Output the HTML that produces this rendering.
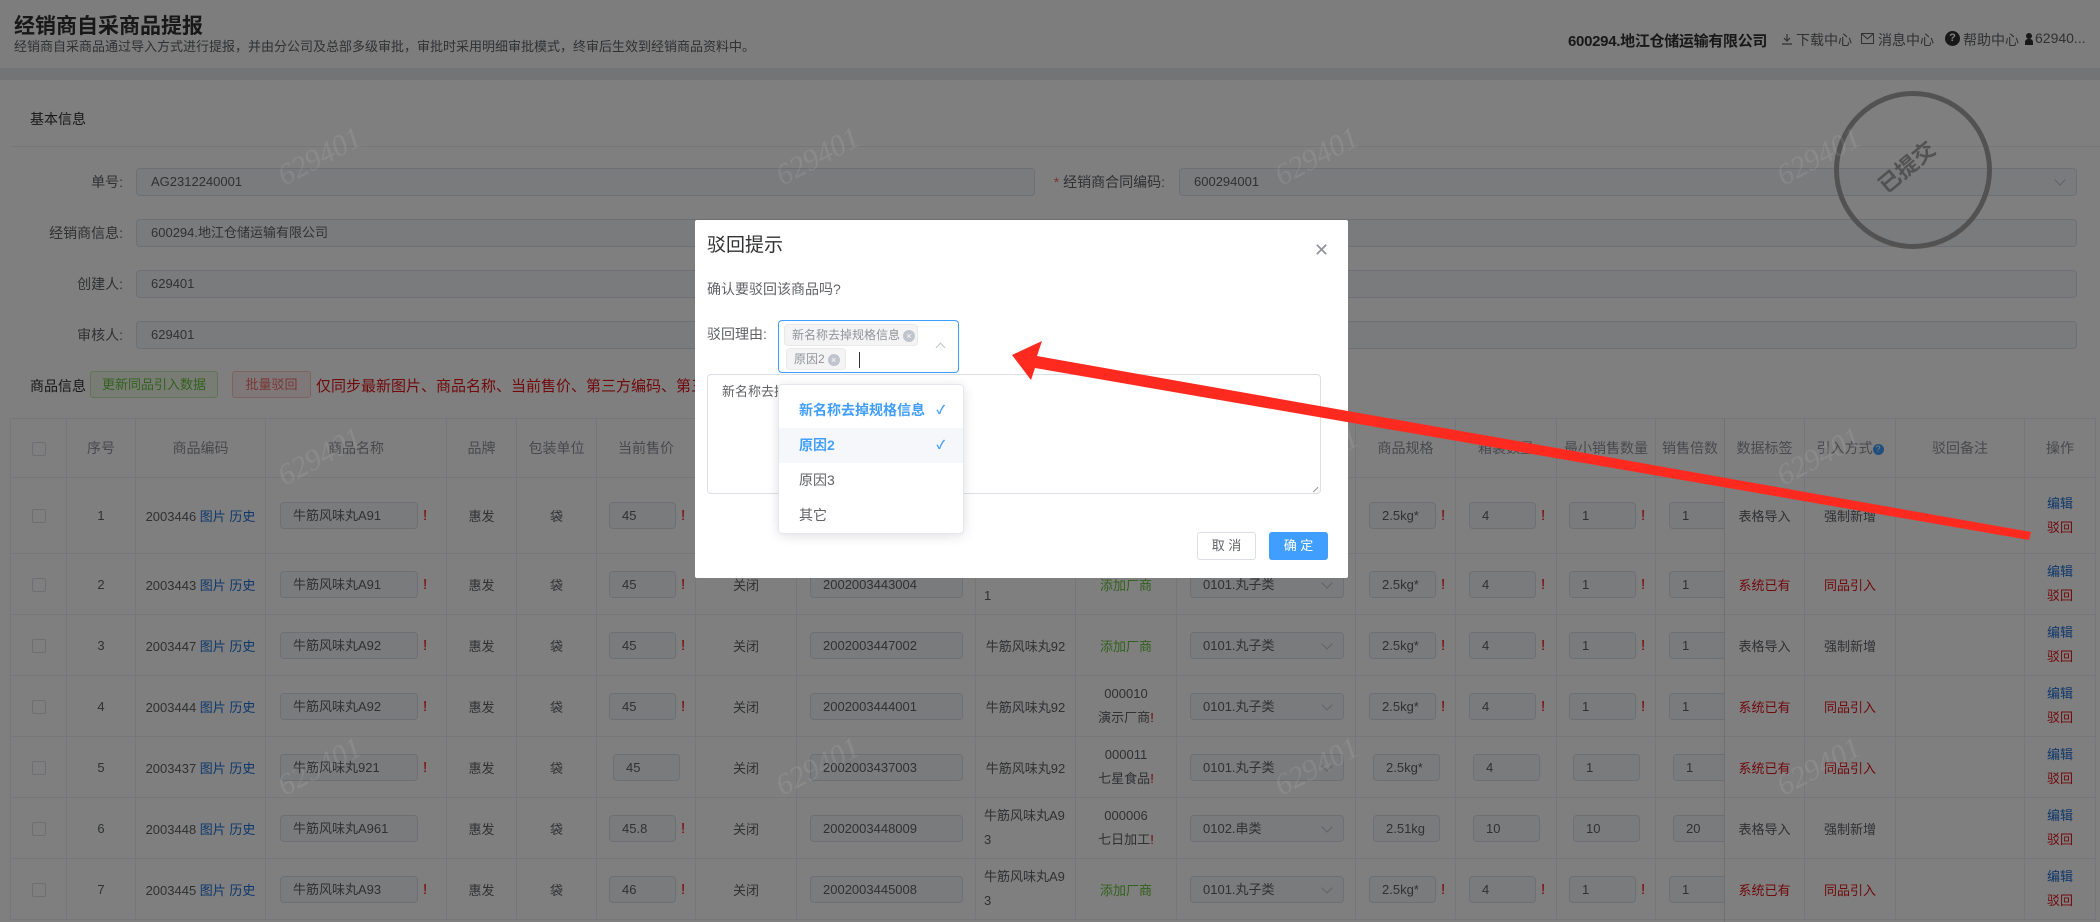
<!DOCTYPE html>
<html><head><meta charset="utf-8">
<style>
*{box-sizing:border-box;margin:0;padding:0}
body{width:2100px;height:922px;overflow:hidden;position:relative;background:#f0f2f5;font-family:"Liberation Sans","Noto Sans CJK SC",sans-serif;color:#606266;font-size:13px}
.a{position:absolute}
#hdr{left:0;top:0;width:2100px;height:68px;background:#fafafa}
#band{left:0;top:68px;width:2100px;height:12px;background:#e6e8eb}
#card{left:0;top:80px;width:2100px;height:842px;background:#fff}
.lbl{position:absolute;font-size:14px;color:#606266;text-align:right}
.inp{position:absolute;height:28px;border:1px solid #dcdfe6;background:#f5f7fa;border-radius:4px;font-size:13px;line-height:26px;padding-left:14px;color:#606266}
table{position:absolute;left:10px;top:418px;border-collapse:collapse;table-layout:fixed;width:2085px}
td,th{border:1px solid #ebeef5;text-align:center;font-size:13px;color:#606266;white-space:nowrap;overflow:hidden;vertical-align:middle}
th{height:59px;color:#909399;font-weight:normal;font-size:14px}
tr.r1 td{height:76px}
tr.rn td{height:61px}
.in{display:inline-block;height:27px;border:1px solid #dcdfe6;background:#f5f7fa;border-radius:4px;line-height:25px;text-align:left;padding-left:12px;vertical-align:middle;overflow:hidden}
.ex{color:#f00;font-size:15px;margin-left:5px;vertical-align:middle}
td.l{text-align:left}
.bl{color:#1d6fd6}
.rd{color:#e0141a}
.gr{color:#67c23a}
.ck{display:inline-block;width:14px;height:14px;border:1px solid #dcdfe6;border-radius:2px;background:#fff;vertical-align:middle}
.sel{position:relative}
.sel:after{content:"";position:absolute;right:12px;top:7px;width:7px;height:7px;border-right:1px solid #c0c4cc;border-bottom:1px solid #c0c4cc;transform:rotate(45deg)}
.two{line-height:24px}
#ov{left:0;top:0;width:2100px;height:922px;background:rgba(0,0,0,.5)}
.wm{position:absolute;font-family:"Liberation Serif",serif;font-style:italic;font-size:30px;color:rgba(255,255,255,.09);transform:rotate(-28deg)}
#modal{left:695px;top:220px;width:653px;height:358px;background:#fff;border-radius:2px}
.dd{position:absolute;left:778px;top:384px;width:186px;height:150px;background:#fff;border:1px solid #e4e7ed;border-radius:4px;box-shadow:0 2px 12px rgba(0,0,0,.12)}
.it{position:absolute;left:0;width:184px;height:35px;line-height:35px;padding-left:20px;font-size:14px;color:#606266}
.chk{position:absolute;right:18px;top:0;color:#409eff;font-size:12px}
.tag{position:absolute;height:22px;background:#f4f4f5;border:1px solid #e9e9eb;border-radius:4px;font-size:12px;color:#909399;line-height:20px;padding-left:7px}
.tx{display:inline-block;width:12px;height:12px;border-radius:50%;background:#c0c4cc;color:#fff;font-size:9px;line-height:12px;text-align:center;vertical-align:middle;margin-left:3px}
</style></head><body>
<div id="hdr" class="a"></div>
<div class="a" style="left:14px;top:10px;font-size:21px;font-weight:bold;color:#303133">经销商自采商品提报</div>
<div class="a" style="left:14px;top:36px;font-size:13px;color:#606266">经销商自采商品通过导入方式进行提报，并由分公司及总部多级审批，审批时采用明细审批模式，终审后生效到经销商品资料中。</div>
<div class="a" style="left:1568px;top:30px;font-size:15px;font-weight:bold;color:#303133;letter-spacing:-0.3px">600294.地江仓储运输有限公司</div>
<svg class="a" style="left:1781px;top:33px" width="12" height="12"><path d="M6 1v7M3 5l3 3 3-3M1 11h10" stroke="#606266" fill="none" stroke-width="1.2"/></svg>
<div class="a" style="left:1796px;top:30px;font-size:14px;color:#606266">下载中心</div>
<svg class="a" style="left:1861px;top:33px" width="13" height="11"><rect x="0.5" y="0.5" width="12" height="10" fill="none" stroke="#606266"/><path d="M1 1l5.5 5 5.5-5" stroke="#606266" fill="none"/></svg>
<div class="a" style="left:1878px;top:30px;font-size:14px;color:#606266">消息中心</div>
<div class="a" style="left:1945px;top:31px;width:15px;height:15px;border-radius:50%;background:#303133;color:#fff;font-size:11px;text-align:center;line-height:15px;font-weight:bold">?</div>
<div class="a" style="left:1963px;top:30px;font-size:14px;color:#606266">帮助中心</div>
<div class="a" style="left:2026px;top:33px;width:6px;height:6px;border-radius:50%;background:#303133"></div>
<div class="a" style="left:2025px;top:39px;width:8px;height:6px;border-radius:3px 3px 0 0;background:#303133"></div>
<div class="a" style="left:2035px;top:30px;font-size:14px;color:#606266">62940...</div>
<div id="band" class="a"></div>
<div id="card" class="a"></div>
<div class="a" style="left:30px;top:109px;font-size:14px;color:#303133">基本信息</div>
<div class="a" style="left:10px;top:146px;width:2090px;height:1px;background:#ebeef5"></div>

<div class="lbl" style="left:20px;top:172px;width:103px">单号:</div>
<div class="inp" style="left:136px;top:168px;width:899px">AG2312240001</div>
<div class="lbl" style="left:1040px;top:172px;width:125px"><span style="color:#f56c6c">* </span>经销商合同编码:</div>
<div class="inp sel" style="left:1179px;top:168px;width:898px">600294001</div>
<div class="lbl" style="left:20px;top:223px;width:103px">经销商信息:</div>
<div class="inp" style="left:136px;top:219px;width:1941px">600294.地江仓储运输有限公司</div>
<div class="lbl" style="left:20px;top:274px;width:103px">创建人:</div>
<div class="inp" style="left:136px;top:270px;width:1941px">629401</div>
<div class="lbl" style="left:20px;top:325px;width:103px">审核人:</div>
<div class="inp" style="left:136px;top:321px;width:1941px">629401</div>

<div class="a" style="left:1834px;top:91px;width:158px;height:158px;border:5px solid #a4a4a4;border-radius:50%"></div>
<div class="a" style="left:1873px;top:150px;font-size:22px;color:#a4a4a4;transform:rotate(-40deg);font-weight:bold">已提交</div>

<div class="a" style="left:30px;top:376px;font-size:14px;color:#303133">商品信息</div>
<div class="a" style="left:90px;top:371px;width:128px;height:27px;border:1px solid #c2e7b0;background:#f0f9eb;color:#67c23a;border-radius:3px;font-size:13px;text-align:center;line-height:25px">更新同品引入数据</div>
<div class="a" style="left:232px;top:371px;width:79px;height:27px;border:1px solid #fbc4c4;background:#fef0f0;color:#f56c6c;border-radius:3px;font-size:13px;text-align:center;line-height:25px">批量驳回</div>
<div class="a" style="left:316px;top:375px;font-size:15px;color:#e0141a">仅同步最新图片、商品名称、当前售价、第三方编码、第三方名称等信息</div>

<table>
<colgroup><col style="width:56px"><col style="width:69px"><col style="width:130px"><col style="width:181px"><col style="width:70px"><col style="width:80px"><col style="width:99px"><col style="width:101px"><col style="width:179px"><col style="width:100px"><col style="width:101px"><col style="width:179px"><col style="width:100px"><col style="width:101px"><col style="width:99px"><col style="width:69px"><col style="width:80px"><col style="width:91px"><col style="width:129px"><col style="width:71px"></colgroup>
<tr><th><span class="ck"></span></th><th>序号</th><th>商品编码</th><th>商品名称</th><th>品牌</th><th>包装单位</th><th>当前售价</th><th>状态</th><th>第三方编码</th><th>第三方名称</th><th>厂商</th><th>商品分类</th><th>商品规格</th><th>箱装数量</th><th>最小销售数量</th><th>销售倍数</th><th>数据标签</th><th>引入方式<span style="display:inline-block;width:11px;height:11px;border-radius:50%;background:#409eff;color:#fff;font-size:9px;line-height:11px;vertical-align:middle">?</span></th><th>驳回备注</th><th>操作</th></tr>

<tr class="r1"><td><span class="ck"></span></td><td>1</td><td>2003446 <span class="bl">图片 历史</span></td><td class="l" style="padding-left:14px"><span class="in" style="width:138px">牛筋风味丸A91</span><span class="ex">!</span></td><td>惠发</td><td>袋</td><td class="l" style="padding-left:12px"><span class="in" style="width:67px">45</span><span class="ex">!</span></td><td>关闭</td><td class="l" style="padding-left:13px"><span class="in" style="width:153px">2002003446001</span></td><td>牛筋风味丸91</td><td class="gr">添加厂商</td><td class="l" style="padding-left:13px"><span class="in sel" style="width:154px">0101.丸子类</span></td><td class="l" style="padding-left:13px"><span class="in" style="width:67px">2.5kg*</span><span class="ex">!</span></td><td class="l" style="padding-left:13px"><span class="in" style="width:67px">4</span><span class="ex">!</span></td><td class="l" style="padding-left:12px"><span class="in" style="width:67px">1</span><span class="ex">!</span></td><td class="l" style="padding-left:13px"><span class="in" style="width:67px">1</span></td><td>表格导入</td><td>强制新增</td><td></td><td class="two"><span class="bl">编辑</span><br><span class="rd">驳回</span></td></tr>

<tr class="rn"><td><span class="ck"></span></td><td>2</td><td>2003443 <span class="bl">图片 历史</span></td><td class="l" style="padding-left:14px"><span class="in" style="width:138px">牛筋风味丸A91</span><span class="ex">!</span></td><td>惠发</td><td>袋</td><td class="l" style="padding-left:12px"><span class="in" style="width:67px">45</span><span class="ex">!</span></td><td>关闭</td><td class="l" style="padding-left:13px"><span class="in" style="width:153px">2002003443004</span></td><td class="l two" style="padding-left:8px">牛筋风味丸A9<br>1</td><td class="gr">添加厂商</td><td class="l" style="padding-left:13px"><span class="in sel" style="width:154px">0101.丸子类</span></td><td class="l" style="padding-left:13px"><span class="in" style="width:67px">2.5kg*</span><span class="ex">!</span></td><td class="l" style="padding-left:13px"><span class="in" style="width:67px">4</span><span class="ex">!</span></td><td class="l" style="padding-left:12px"><span class="in" style="width:67px">1</span><span class="ex">!</span></td><td class="l" style="padding-left:13px"><span class="in" style="width:67px">1</span></td><td class="rd">系统已有</td><td class="rd">同品引入</td><td></td><td class="two"><span class="bl">编辑</span><br><span class="rd">驳回</span></td></tr>

<tr class="rn"><td><span class="ck"></span></td><td>3</td><td>2003447 <span class="bl">图片 历史</span></td><td class="l" style="padding-left:14px"><span class="in" style="width:138px">牛筋风味丸A92</span><span class="ex">!</span></td><td>惠发</td><td>袋</td><td class="l" style="padding-left:12px"><span class="in" style="width:67px">45</span><span class="ex">!</span></td><td>关闭</td><td class="l" style="padding-left:13px"><span class="in" style="width:153px">2002003447002</span></td><td>牛筋风味丸92</td><td class="gr">添加厂商</td><td class="l" style="padding-left:13px"><span class="in sel" style="width:154px">0101.丸子类</span></td><td class="l" style="padding-left:13px"><span class="in" style="width:67px">2.5kg*</span><span class="ex">!</span></td><td class="l" style="padding-left:13px"><span class="in" style="width:67px">4</span><span class="ex">!</span></td><td class="l" style="padding-left:12px"><span class="in" style="width:67px">1</span><span class="ex">!</span></td><td class="l" style="padding-left:13px"><span class="in" style="width:67px">1</span></td><td>表格导入</td><td>强制新增</td><td></td><td class="two"><span class="bl">编辑</span><br><span class="rd">驳回</span></td></tr>

<tr class="rn"><td><span class="ck"></span></td><td>4</td><td>2003444 <span class="bl">图片 历史</span></td><td class="l" style="padding-left:14px"><span class="in" style="width:138px">牛筋风味丸A92</span><span class="ex">!</span></td><td>惠发</td><td>袋</td><td class="l" style="padding-left:12px"><span class="in" style="width:67px">45</span><span class="ex">!</span></td><td>关闭</td><td class="l" style="padding-left:13px"><span class="in" style="width:153px">2002003444001</span></td><td>牛筋风味丸92</td><td class="two">000010<br>演示厂商<span class="rd">!</span></td><td class="l" style="padding-left:13px"><span class="in sel" style="width:154px">0101.丸子类</span></td><td class="l" style="padding-left:13px"><span class="in" style="width:67px">2.5kg*</span><span class="ex">!</span></td><td class="l" style="padding-left:13px"><span class="in" style="width:67px">4</span><span class="ex">!</span></td><td class="l" style="padding-left:12px"><span class="in" style="width:67px">1</span><span class="ex">!</span></td><td class="l" style="padding-left:13px"><span class="in" style="width:67px">1</span></td><td class="rd">系统已有</td><td class="rd">同品引入</td><td></td><td class="two"><span class="bl">编辑</span><br><span class="rd">驳回</span></td></tr>

<tr class="rn"><td><span class="ck"></span></td><td>5</td><td>2003437 <span class="bl">图片 历史</span></td><td class="l" style="padding-left:14px"><span class="in" style="width:138px">牛筋风味丸921</span><span class="ex">!</span></td><td>惠发</td><td>袋</td><td class="l" style="padding-left:16px"><span class="in" style="width:67px">45</span></td><td>关闭</td><td class="l" style="padding-left:13px"><span class="in" style="width:153px">2002003437003</span></td><td>牛筋风味丸92</td><td class="two">000011<br>七星食品<span class="rd">!</span></td><td class="l" style="padding-left:13px"><span class="in sel" style="width:154px">0101.丸子类</span></td><td class="l" style="padding-left:17px"><span class="in" style="width:67px">2.5kg*</span></td><td class="l" style="padding-left:17px"><span class="in" style="width:67px">4</span></td><td class="l" style="padding-left:16px"><span class="in" style="width:67px">1</span></td><td class="l" style="padding-left:17px"><span class="in" style="width:67px">1</span></td><td class="rd">系统已有</td><td class="rd">同品引入</td><td></td><td class="two"><span class="bl">编辑</span><br><span class="rd">驳回</span></td></tr>

<tr class="rn"><td><span class="ck"></span></td><td>6</td><td>2003448 <span class="bl">图片 历史</span></td><td class="l" style="padding-left:14px"><span class="in" style="width:138px">牛筋风味丸A961</span></td><td>惠发</td><td>袋</td><td class="l" style="padding-left:12px"><span class="in" style="width:67px">45.8</span><span class="ex">!</span></td><td>关闭</td><td class="l" style="padding-left:13px"><span class="in" style="width:153px">2002003448009</span></td><td class="l two" style="padding-left:8px">牛筋风味丸A9<br>3</td><td class="two">000006<br>七日加工<span class="rd">!</span></td><td class="l" style="padding-left:13px"><span class="in sel" style="width:154px">0102.串类</span></td><td class="l" style="padding-left:17px"><span class="in" style="width:67px">2.51kg</span></td><td class="l" style="padding-left:17px"><span class="in" style="width:67px">10</span></td><td class="l" style="padding-left:16px"><span class="in" style="width:67px">10</span></td><td class="l" style="padding-left:17px"><span class="in" style="width:67px">20</span></td><td>表格导入</td><td>强制新增</td><td></td><td class="two"><span class="bl">编辑</span><br><span class="rd">驳回</span></td></tr>

<tr class="rn"><td><span class="ck"></span></td><td>7</td><td>2003445 <span class="bl">图片 历史</span></td><td class="l" style="padding-left:14px"><span class="in" style="width:138px">牛筋风味丸A93</span><span class="ex">!</span></td><td>惠发</td><td>袋</td><td class="l" style="padding-left:12px"><span class="in" style="width:67px">46</span><span class="ex">!</span></td><td>关闭</td><td class="l" style="padding-left:13px"><span class="in" style="width:153px">2002003445008</span></td><td class="l two" style="padding-left:8px">牛筋风味丸A9<br>3</td><td class="gr">添加厂商</td><td class="l" style="padding-left:13px"><span class="in sel" style="width:154px">0101.丸子类</span></td><td class="l" style="padding-left:13px"><span class="in" style="width:67px">2.5kg*</span><span class="ex">!</span></td><td class="l" style="padding-left:13px"><span class="in" style="width:67px">4</span><span class="ex">!</span></td><td class="l" style="padding-left:12px"><span class="in" style="width:67px">1</span><span class="ex">!</span></td><td class="l" style="padding-left:13px"><span class="in" style="width:67px">1</span></td><td class="rd">系统已有</td><td class="rd">同品引入</td><td></td><td class="two"><span class="bl">编辑</span><br><span class="rd">驳回</span></td></tr>
</table>
<div class="a" style="left:1724px;top:418px;width:1px;height:504px;background:#e0e0e0;box-shadow:-3px 0 6px rgba(0,0,0,.08)"></div>

<div id="ov" class="a"></div>

<div id="modal" class="a"></div>
<div class="a" style="left:707px;top:230px;font-size:19px;color:#303133">驳回提示</div>
<div class="a" style="left:1314px;top:240px;font-size:18px;color:#909399">✕</div>
<div class="a" style="left:707px;top:279px;font-size:14px;color:#606266">确认要驳回该商品吗?</div>
<div class="a" style="left:707px;top:324px;font-size:14px;color:#606266">驳回理由:</div>
<div class="a" style="left:778px;top:320px;width:181px;height:53px;border:1px solid #409eff;border-radius:4px;background:#fff"></div>
<div class="tag" style="left:784px;top:324px;width:134px">新名称去掉规格信息<span class="tx">×</span></div>
<div class="tag" style="left:786px;top:348px;width:60px">原因2<span class="tx">×</span></div>
<div class="a" style="left:859px;top:352px;width:1px;height:16px;background:#303133"></div>
<div class="a" style="left:937px;top:344px;width:7px;height:7px;border-left:1px solid #c0c4cc;border-top:1px solid #c0c4cc;transform:rotate(45deg)"></div>
<div class="a" style="left:707px;top:374px;width:614px;height:120px;border:1px solid #dcdfe6;border-radius:4px;background:#fff"></div>
<div class="a" style="left:722px;top:381px;font-size:13px;color:#606266">新名称去掉规格信息,原因2</div>
<div class="a" style="left:1310px;top:484px;width:7px;height:7px;border-bottom:1px solid #999;transform:rotate(-45deg)"></div>
<div class="dd">
<div class="it" style="top:8px;color:#409eff;font-weight:bold">新名称去掉规格信息<span class="chk">✓</span></div>
<div class="it" style="top:43px;color:#409eff;font-weight:bold;background:#f5f7fa">原因2<span class="chk">✓</span></div>
<div class="it" style="top:78px">原因3</div>
<div class="it" style="top:113px">其它</div>
</div>
<div class="a" style="left:1197px;top:532px;width:59px;height:28px;border:1px solid #dcdfe6;border-radius:3px;background:#fff;font-size:13px;text-align:center;line-height:26px;color:#606266">取 消</div>
<div class="a" style="left:1269px;top:532px;width:59px;height:28px;border-radius:3px;background:#409eff;font-size:13px;text-align:center;line-height:28px;color:#fff">确 定</div>

<div class="wm" style="left:275px;top:140px">629401</div>
<div class="wm" style="left:773px;top:140px">629401</div>
<div class="wm" style="left:1272px;top:140px">629401</div>
<div class="wm" style="left:1774px;top:140px">629401</div>
<div class="wm" style="left:275px;top:440px">629401</div>
<div class="wm" style="left:773px;top:440px">629401</div>
<div class="wm" style="left:1272px;top:440px">629401</div>
<div class="wm" style="left:1774px;top:440px">629401</div>
<div class="wm" style="left:275px;top:750px">629401</div>
<div class="wm" style="left:773px;top:750px">629401</div>
<div class="wm" style="left:1272px;top:750px">629401</div>
<div class="wm" style="left:1774px;top:750px">629401</div>

<svg class="a" style="left:0;top:0" width="2100" height="922"><polygon fill="#ff2a1f" points="1012,355 1042,341 1037,356 2031,532 2029,540 1035,368 1031,380"/></svg>
</body></html>
